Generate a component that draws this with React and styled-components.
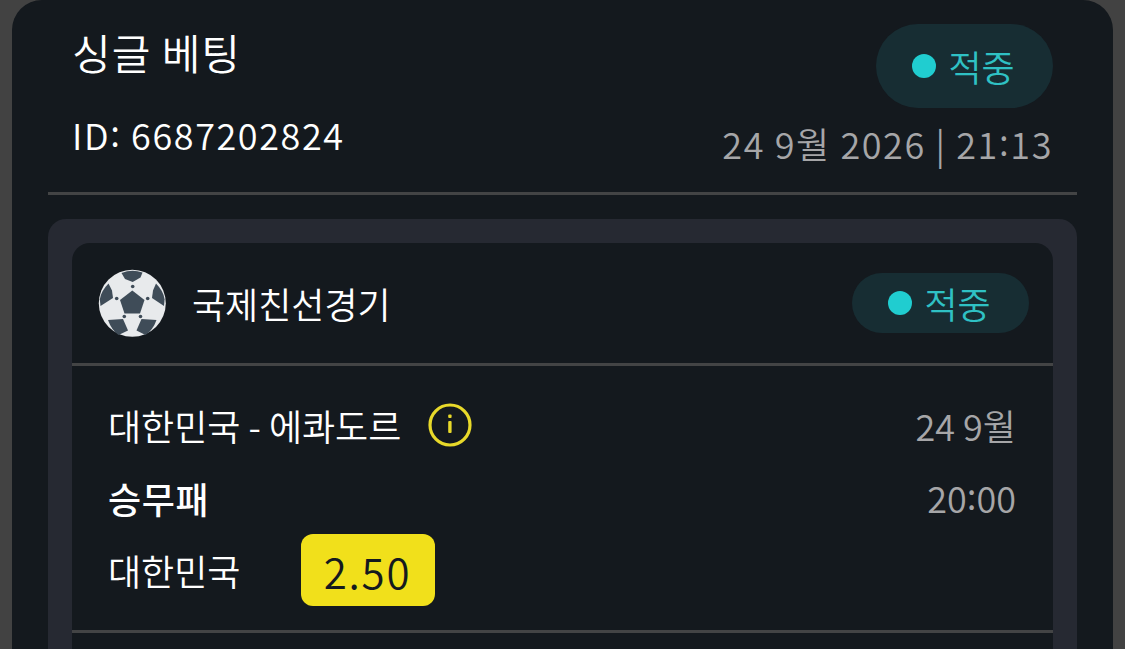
import React from 'react'
import styled, { createGlobalStyle } from 'styled-components'

const GlobalStyle = createGlobalStyle`
  html, body {
    margin: 0;
    padding: 0;
    height: 649px;
    overflow: hidden;
    background: #424242;
    font-family: "Noto Sans CJK KR", "Noto Sans", sans-serif;
    font-weight: 350;
  }
`

const Ticket = styled.div`
  margin: 0 12px;
  height: 649px;
  padding: 0 36px;
  box-sizing: border-box;
  background: #14191e;
  border-radius: 30px 30px 0 0;
  overflow: hidden;
`

const Head = styled.div`
  display: flex;
  justify-content: space-between;
  height: 192px;
  box-sizing: border-box;
  padding: 24px 24px 0 25px;
`

const HeadLeft = styled.div`
  display: flex;
  flex-direction: column;
`

const HeadRight = styled.div`
  display: flex;
  flex-direction: column;
  align-items: flex-end;
`

const Title = styled.div`
  font-size: 42px;
  line-height: 56px;
  letter-spacing: 1px;
  margin-left: -1px;
  color: #fff;
`

const TicketId = styled.div`
  margin-top: 29px;
  margin-left: -1px;
  font-size: 36px;
  line-height: 50px;
  letter-spacing: 1.6px;
  color: #fff;
`

const Stamp = styled.div`
  margin-top: 10px;
  font-size: 36px;
  line-height: 50px;
  letter-spacing: 1.6px;
  color: #a6a6a8;
`

const Colon = styled.span`
  vertical-align: 3px;
  line-height: 0;
`

const Badge = styled.div`
  display: flex;
  align-items: center;
  justify-content: center;
  gap: 12px;
  width: 177px;
  height: ${({ $height }) => $height}px;
  padding-right: 2px;
  box-sizing: border-box;
  background: #172d33;
  border-radius: 42px;
  font-size: 36px;
  color: #2fc1c4;
`

const Dot = styled.span`
  width: 24px;
  height: 24px;
  border-radius: 50%;
  background: #20cdd0;
`

const Rule = styled.div`
  height: 3px;
  background: #434445;
`

const Panel = styled.div`
  margin-top: 24px;
  padding: 24px 24px 0;
  height: 500px;
  background: #262932;
  border-radius: 18px 18px 0 0;
`

const Leg = styled.div`
  height: 500px;
  background: #14191e;
  border-radius: 18px 18px 0 0;
`

const LegHead = styled.div`
  display: flex;
  align-items: center;
  height: 120px;
  padding: 0 24px 0 25px;
`

const League = styled.div`
  margin-left: 25px;
  flex: 1;
  font-size: 36px;
  color: #fff;
`

const LegBody = styled.div`
  display: flex;
  justify-content: space-between;
  height: 264px;
  box-sizing: border-box;
  padding: 23px 37px 0 36px;
`

const Lines = styled.div`
  display: flex;
  flex-direction: column;
`

const Line = styled.div`
  display: flex;
  align-items: center;
  height: 72.5px;
  font-size: 36px;
  font-weight: ${({ $bold }) => ($bold ? 500 : 350)};
  letter-spacing: ${({ $bold }) => ($bold ? '0.6px' : '0')};
  color: #fff;
`

const InfoMark = styled.svg`
  margin-left: 27px;
`

const Odds = styled.span`
  display: flex;
  align-items: center;
  justify-content: center;
  margin-left: 61px;
  width: 134px;
  height: 72px;
  padding-right: 2px;
  box-sizing: border-box;
  background: #f1e01b;
  border-radius: 12px;
  font-size: 42px;
  letter-spacing: 1.8px;
  color: #14191e;
`

const When = styled.div`
  display: flex;
  flex-direction: column;
  align-items: flex-end;
  font-size: 36px;
  line-height: 72px;
  color: #a6a6a8;
`

const Ball = () => (
  <svg width="70" height="70" viewBox="0 0 70 70">
    <circle cx="35.3" cy="35.3" r="33.5" fill="#e8eaec" />
    <g fill="#3f4c58">
      <path d="M35.3 22.5 47.5 32 43 45.5 27.5 45.5 23 32Z" />
      <path d="M24.5 5Q35 .8 45.5 4.5L43.5 9.5 35.7 14 28 11Z" />
      <path d="M11.5 15.5Q4 23 2.8 31.3L3.5 38 16 30 15 22.5Z" />
      <path d="M59 15.5Q66.5 23 67.6 31.3L67 38 55 30 56 22.5Z" />
      <path d="M11 52 26 51 31 62.5 21.5 67Q14.5 62 11 52Z" />
      <path d="M44.5 51 59.5 52Q56 62 48.5 67L39.5 62.5Z" />
      <circle cx="35.7" cy="18.5" r="1.8" />
      <circle cx="19.7" cy="30.5" r="1.8" />
      <circle cx="50.7" cy="30.5" r="1.8" />
      <circle cx="27.3" cy="48.5" r="1.8" />
      <circle cx="43.5" cy="48.5" r="1.8" />
    </g>
  </svg>
)

const HitBadge = ({ height }) => (
  <Badge $height={height}>
    <Dot />
    적중
  </Badge>
)

export default function App() {
  return (
    <>
      <GlobalStyle />
      <Ticket>
        <Head>
          <HeadLeft>
            <Title>싱글 베팅</Title>
            <TicketId>ID<Colon>:</Colon> 6687202824</TicketId>
          </HeadLeft>
          <HeadRight>
            <HitBadge height={84} />
            <Stamp>24 9월 2026 | 21<Colon>:</Colon>13</Stamp>
          </HeadRight>
        </Head>
        <Rule />
        <Panel>
          <Leg>
            <LegHead>
              <Ball />
              <League>국제친선경기</League>
              <HitBadge height={60} />
            </LegHead>
            <Rule />
            <LegBody>
              <Lines>
                <Line>
                  대한민국 - 에콰도르
                  <InfoMark width="44" height="44" viewBox="0 0 44 44" fill="none">
                    <circle cx="22" cy="22" r="20" stroke="#e8d92a" strokeWidth="3.2" />
                    <rect x="20.2" y="18" width="3.4" height="12" rx="1" fill="#e8d92a" />
                    <rect x="20.2" y="11.5" width="3.4" height="3.6" rx="1" fill="#e8d92a" />
                  </InfoMark>
                </Line>
                <Line $bold>승무패</Line>
                <Line>
                  대한민국
                  <Odds>2.50</Odds>
                </Line>
              </Lines>
              <When>
                <span>24 9월</span>
                <span>20<Colon>:</Colon>00</span>
              </When>
            </LegBody>
            <Rule />
          </Leg>
        </Panel>
      </Ticket>
    </>
  )
}
